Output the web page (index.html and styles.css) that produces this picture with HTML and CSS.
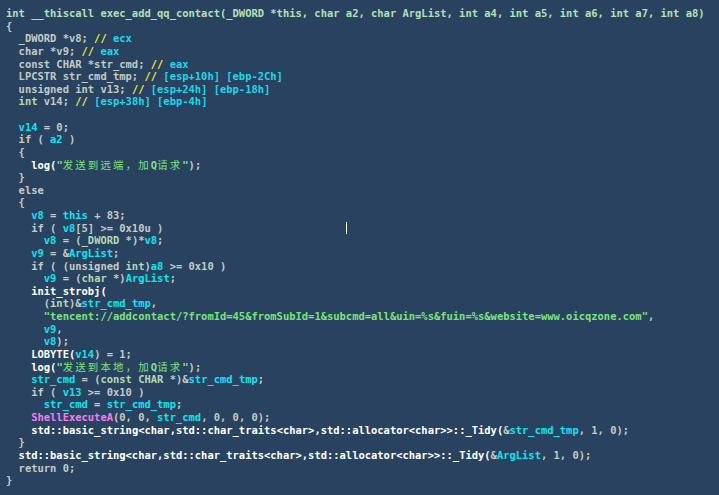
FILE: index.html
```html
<!DOCTYPE html>
<html lang="zh">
<head>
<meta charset="utf-8">
<title>Pseudocode</title>
<link rel="stylesheet" href="styles.css">
</head>
<body>
<pre class="code"><span class="sig">int __thiscall exec_add_qq_contact(_DWORD *this, char a2, char ArgList, int a4, int a5, int a6, int a7, int a8)</span>
{
  _DWORD *v8; <span class="cm">// </span><span class="cv">ecx</span>
  char *v9; <span class="cm">// </span><span class="cv">eax</span>
  const CHAR *str_cmd; <span class="cm">// </span><span class="cv">eax</span>
  LPCSTR str_cmd_tmp; <span class="cm">// </span><span class="cv">[esp+10h] [ebp-2Ch]</span>
  unsigned int v13; <span class="cm">// </span><span class="cv">[esp+24h] [ebp-18h]</span>
  <span class="ty">int</span> v14; <span class="cm">// </span><span class="cv">[esp+38h] [ebp-4h]</span>

  <span class="v">v14</span> = 0;
  if ( <span class="v">a2</span> )
  {
    <span class="fn">log(</span><span class="s">"<span class="cjk">发送到远端，加</span>Q<span class="cjk">请求</span>"</span>);
  }
  else
  {
    <span class="v">v8</span> = <span class="v">this</span> + 83;
    if ( <span class="v">v8</span>[5] &gt;= 0x10u )                             <span class="caret"></span>
      <span class="v">v8</span> = (<span class="ty">_DWORD</span> *)*<span class="v">v8</span>;
    <span class="v">v9</span> = &amp;<span class="v">ArgList</span>;
    if ( (unsigned <span class="ty">int</span>)<span class="v">a8</span> &gt;= 0x10 )
      <span class="v">v9</span> = (<span class="ty">char</span> *)<span class="v">ArgList</span>;
    <span class="fn">init_strobj(</span>
      (<span class="ty">int</span>)&amp;<span class="v">str_cmd_tmp</span>,
      <span class="s">"tencent://addcontact/?fromId=45&amp;fromSubId=1&amp;subcmd=all&amp;uin=%s&amp;fuin=%s&amp;website=www.oicqzone.com"</span>,
      <span class="v">v9</span>,
      <span class="v">v8</span>);
    <span class="fn">LOBYTE(</span><span class="v">v14</span>) = 1;
    <span class="fn">log(</span><span class="s">"<span class="cjk">发送到本地，加</span>Q<span class="cjk">请求</span>"</span>);
    <span class="v">str_cmd</span> = (<span class="ty">const CHAR</span> *)&amp;<span class="v">str_cmd_tmp</span>;
    if ( <span class="v">v13</span> &gt;= 0x10 )
      <span class="v">str_cmd</span> = <span class="v">str_cmd_tmp</span>;
    <span class="imp">ShellExecuteA</span>(0, 0, <span class="v">str_cmd</span>, 0, 0, 0);
    <span class="fn">std::basic_string&lt;char,std::char_traits&lt;char&gt;,std::allocator&lt;char&gt;&gt;::_Tidy(</span>&amp;<span class="v">str_cmd_tmp</span>, 1, 0);
  }
  <span class="fn">std::basic_string&lt;char,std::char_traits&lt;char&gt;,std::allocator&lt;char&gt;&gt;::_Tidy(</span>&amp;<span class="v">ArgList</span>, 1, 0);
  return 0;
}</pre>
</body>
</html>
```
FILE: styles.css
```css
html, body {
  margin: 0;
  padding: 0;
  background: #284260;
  height: 100%;
}

.code {
  margin: 0;
  padding: 7px 0 0 6px;
  font-family: "DejaVu Sans Mono", "Liberation Mono", "Noto Sans CJK SC", monospace;
  font-size: 10.46px;
  font-weight: bold;
  line-height: 12.62px;
  color: #c4cac4;
  white-space: pre;
}

.sig { color: #b2e0b0; }
.ty { color: #b4d8b2; }
.cm { color: #f0f038; }
.cv { color: #1ed8ec; }
.v { color: #10e4f4; }
.fn { color: #ffffff; }
.s { color: #7ce27c; }
.imp { color: #f27ef2; }

.cjk {
  font-family: "Noto Sans CJK SC", sans-serif;
  font-weight: normal;
  letter-spacing: 2.14px;
}

.caret {
  display: inline-block;
  width: 1px;
  height: 12px;
  background: #ffffff;
  vertical-align: -2px;
}
```
